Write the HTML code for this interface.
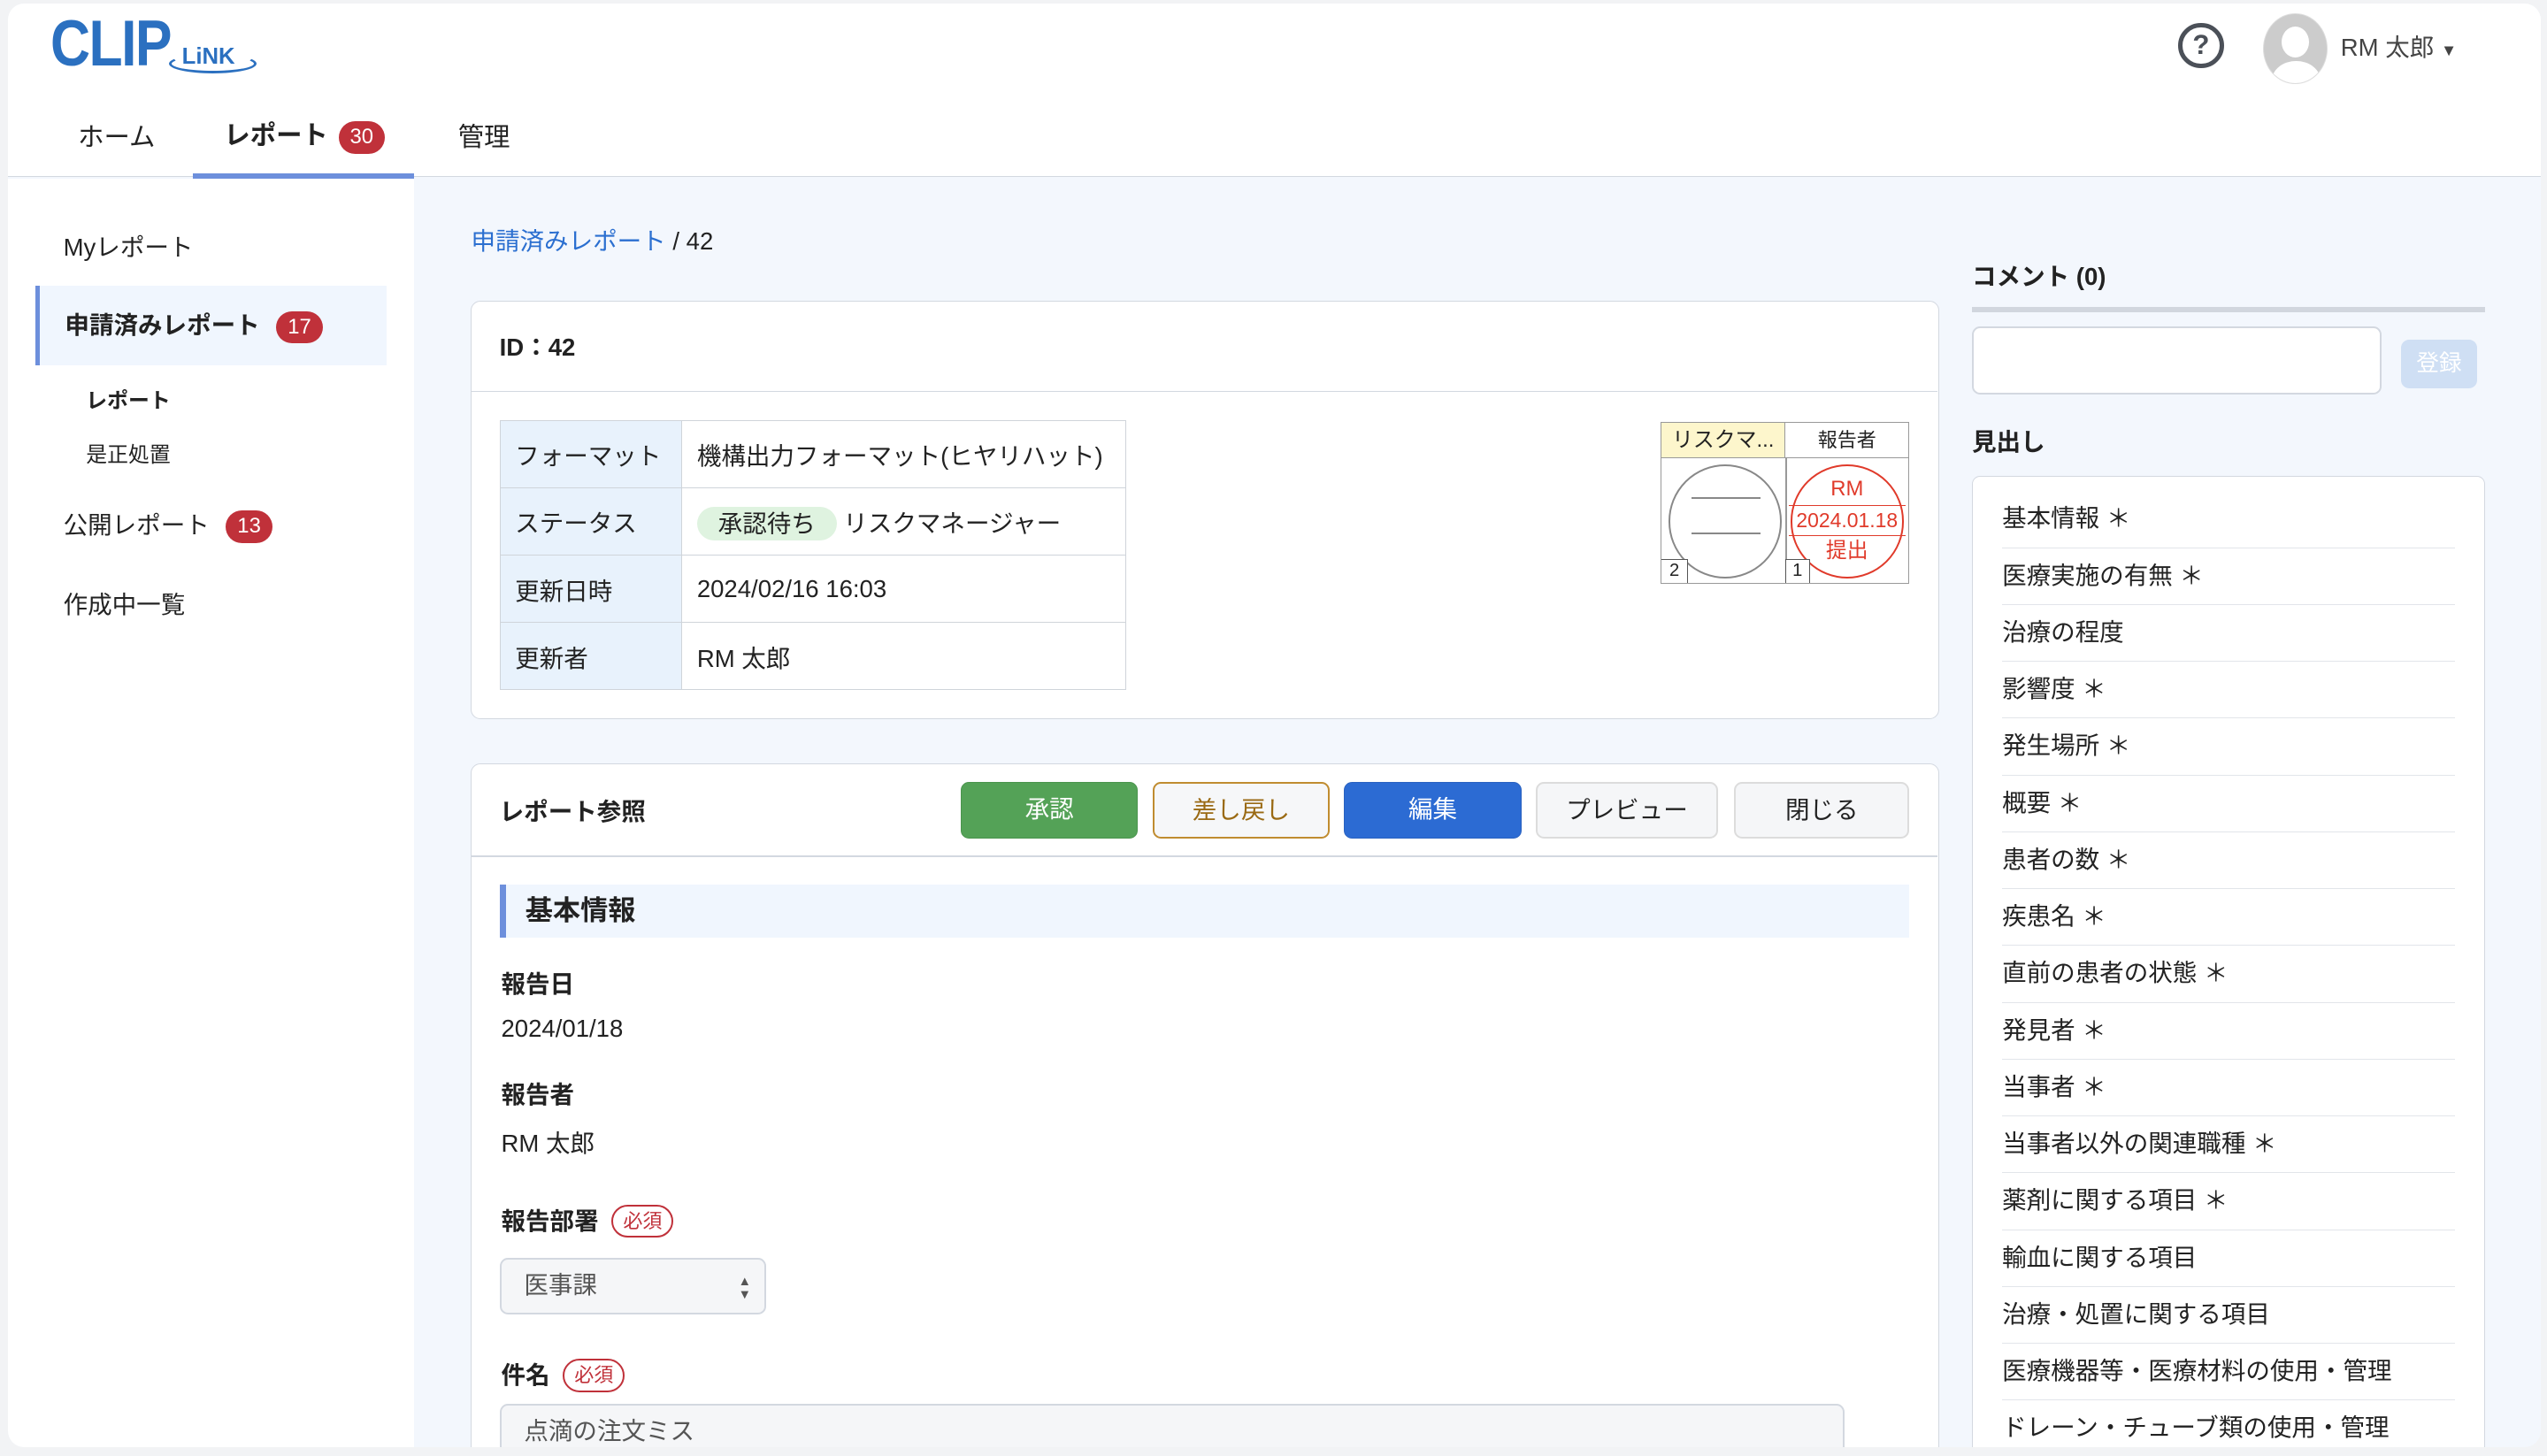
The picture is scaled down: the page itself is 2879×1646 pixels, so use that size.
<!DOCTYPE html>
<html><head><meta charset="utf-8"><style>
*{box-sizing:border-box;margin:0;padding:0}
html,body{width:2879px;height:1646px;overflow:hidden;background:#f2f3f5}
#r{zoom:1.83610;width:1568px;height:897px;position:relative;font-family:"Liberation Sans","Noto Sans CJK JP",sans-serif;color:#222;font-size:15px}
.a{position:absolute}
.page{left:5px;top:2px;width:1559px;height:889px;background:#f3f7fd;border-radius:10px;overflow:hidden}
.badge{display:inline-block;background:#c0313a;color:#fff;border-radius:11px;font-size:13px;line-height:20px;height:20px;padding:0 7px;font-weight:normal;vertical-align:middle}
.card{background:#fff;border:1px solid #d3d8e0;border-radius:6px}
table.info{border-collapse:collapse}
table.info td{border:1px solid #cfd4da;height:41.5px;padding:0 9px;font-size:15px}
table.info td.l{background:#e8f2fc;width:112px}
.btn{position:absolute;top:11px;height:35px;border-radius:5px;text-align:center;line-height:33px;font-size:15px}
.lbl{position:absolute;left:18px;font-weight:bold;font-size:15px}
.val{position:absolute;left:18px;font-size:15px}
.req{display:inline-block;border:1.5px solid #c0313a;color:#c0313a;border-radius:11px;font-size:12px;font-weight:normal;padding:0 6px;line-height:18px;margin-left:8px;vertical-align:1px}
.hl div{height:35px;line-height:34px;border-bottom:1px solid #e2e5ea;padding-left:0;font-size:15px}
</style></head><body><div id="r">
<div class="a page">
 <div class="a" style="left:0;top:0;width:1559px;height:107px;background:#fff;border-bottom:1px solid #d3d8e0"></div>
 <div class="a" style="left:0;top:108px;width:250px;height:790px;background:#fff"></div>
 <!-- logo -->
 <div class="a" style="left:26px;top:2px;font-size:40px;font-weight:bold;color:#2b70c0;letter-spacing:-1px;transform:scaleX(0.85);transform-origin:left">CLIP</div>
 <div class="a" style="left:107px;top:25px;font-size:14px;font-weight:bold;color:#2b70c0">LiNK</div>
 <div class="a" style="left:99px;top:31px;width:54px;height:12px;border:2px solid #2b70c0;border-radius:50%;border-top-color:transparent"></div>
 <!-- nav -->
 <div class="a" style="left:43px;top:70px;font-size:16px">ホーム</div>
 <div class="a" style="left:133px;top:69px;font-size:16px;font-weight:bold">レポート <span class="badge" style="margin-left:2px">30</span></div>
 <div class="a" style="left:277px;top:70px;font-size:16px">管理</div>
 <div class="a" style="left:114px;top:105px;width:136px;height:3px;background:#6d8fdc"></div>
 <!-- header right -->
 <div class="a" style="left:1336px;top:12px;width:28px;height:28px;border:3px solid #4b5058;border-radius:50%;text-align:center;font-weight:bold;font-size:17px;line-height:22px;color:#4b5058">?</div>
 <div class="a" style="left:1388px;top:6px;width:40px;height:44px;border-radius:50%;background:#ccc;border:1px solid #ddd;overflow:hidden">
  <div class="a" style="left:11px;top:8px;width:17px;height:19px;border-radius:50%;background:#fff"></div>
  <div class="a" style="left:5px;top:29px;width:30px;height:24px;border-radius:50%;background:#fff"></div>
 </div>
 <div class="a" style="left:1436px;top:15px;font-size:15px;color:#444">RM 太郎 <span style="font-size:10px">▼</span></div>
 <!-- sidebar -->
 <div class="a" style="left:34px;top:138px;font-size:15px">Myレポート</div>
 <div class="a" style="left:17px;top:174px;width:216px;height:49px;background:#f0f6fe;border-left:3px solid #6d8fdc"></div>
 <div class="a" style="left:35px;top:186px;font-size:15px;font-weight:bold">申請済みレポート <span class="badge" style="margin-left:6px">17</span></div>
 <div class="a" style="left:48px;top:234px;font-size:13px;font-weight:bold">レポート</div>
 <div class="a" style="left:48px;top:267px;font-size:13px">是正処置</div>
 <div class="a" style="left:34px;top:309px;font-size:15px">公開レポート <span class="badge" style="margin-left:6px">13</span></div>
 <div class="a" style="left:34px;top:358px;font-size:15px">作成中一覧</div>
 <!-- breadcrumb -->
 <div class="a" style="left:285px;top:134px;font-size:15px"><span style="color:#2b6fd0">申請済みレポート</span> / 42</div>
 <!-- card1 -->
 <div class="a card" style="left:285px;top:183px;width:904px;height:258px">
  <div class="a" style="left:17px;top:16px;font-weight:bold">ID：42</div>
  <div class="a" style="left:0;top:55px;width:902px;height:1px;background:#d3d8e0"></div>
  <table class="info a" style="left:17px;top:73px;width:386px">
   <tr><td class="l">フォーマット</td><td>機構出力フォーマット(ヒヤリハット)</td></tr>
   <tr><td class="l">ステータス</td><td><span style="background:#dff3e0;border-radius:11px;padding:2px 13px">承認待ち</span> リスクマネージャー</td></tr>
   <tr><td class="l">更新日時</td><td>2024/02/16 16:03</td></tr>
   <tr><td class="l">更新者</td><td>RM 太郎</td></tr>
  </table>
  <div class="a" style="left:732px;top:74px;width:153px;height:100px;border:1px solid #999">
   <div class="a" style="left:0;top:0;width:76px;height:22px;background:#fdf6cc;border-right:1px solid #999;border-bottom:1px solid #999;font-size:13px;text-align:center;line-height:22px">リスクマ...</div>
   <div class="a" style="left:76px;top:0;width:76px;height:22px;border-bottom:1px solid #999;font-size:12px;text-align:center;line-height:22px">報告者</div>
   <div class="a" style="left:76px;top:22px;width:1px;height:77px;background:#999"></div>
   <div class="a" style="left:4px;top:26px;width:70px;height:70px;border:1.5px solid #888;border-radius:50%"></div>
   <div class="a" style="left:18px;top:46px;width:43px;height:1px;background:#888"></div>
   <div class="a" style="left:18px;top:68px;width:43px;height:1px;background:#888"></div>
   <div class="a" style="left:0;top:84px;width:16px;height:15px;border:1px solid #555;border-left:0;border-bottom:0;background:#fff;font-size:11px;text-align:center;line-height:14px">2</div>
   <div class="a" style="left:79px;top:26px;width:70px;height:70px;border:1.5px solid #e03a2a;border-radius:50%;color:#e03a2a;text-align:center;font-size:13px">
    <div style="margin-top:6px;line-height:16px">RM</div>
    <div style="border-top:1px solid #e03a2a;border-bottom:1px solid #e03a2a;margin:2px -2px 0;line-height:18px;font-size:12.5px">2024.01.18</div>
    <div style="line-height:18px">提出</div>
   </div>
   <div class="a" style="left:76px;top:84px;width:15px;height:15px;border:1px solid #555;border-bottom:0;background:#fff;font-size:11px;text-align:center;line-height:14px">1</div>
  </div>
 </div>
 <!-- card2 -->
 <div class="a card" style="left:285px;top:468px;width:904px;height:440px">
  <div class="a" style="left:17px;top:17px;font-weight:bold">レポート参照</div>
  <div class="btn" style="left:301px;width:109px;background:#54a257;color:#fff;border:1px solid #4a944d">承認</div>
  <div class="btn" style="left:419px;width:109px;background:#f6f7f9;color:#9a6a14;border:1.5px solid #c08c30">差し戻し</div>
  <div class="btn" style="left:537px;width:109px;background:#2c6bd3;color:#fff;border:1px solid #2a62c0">編集</div>
  <div class="btn" style="left:655px;width:112px;background:#f5f6f8;border:1.5px solid #dcdcdc">プレビュー</div>
  <div class="btn" style="left:777px;width:108px;background:#f5f6f8;border:1.5px solid #dcdcdc">閉じる</div>
  <div class="a" style="left:0;top:56px;width:902px;height:1px;background:#d3d8e0"></div>
  <div class="a" style="left:17px;top:74px;width:868px;height:33px;background:#f0f6fe;border-left:4px solid #6d8fdc;font-weight:bold;font-size:17px;line-height:33px;padding-left:12px">基本情報</div>
  <div class="lbl" style="top:123px">報告日</div>
  <div class="val" style="top:154px">2024/01/18</div>
  <div class="lbl" style="top:191px">報告者</div>
  <div class="val" style="top:221px">RM 太郎</div>
  <div class="lbl" style="top:269px">報告部署<span class="req">必須</span></div>
  <div class="a" style="left:17px;top:304px;width:164px;height:35px;background:#f5f6f8;border:1.5px solid #d3d8e0;border-radius:5px;padding-left:14px;line-height:32px;color:#555">医事課<span style="position:absolute;right:8px;font-size:8px;line-height:8px;top:10px">▲<br>▼</span></div>
  <div class="lbl" style="top:364px">件名<span class="req">必須</span></div>
  <div class="a" style="left:17px;top:394px;width:828px;height:40px;background:#f5f6f8;border:1.5px solid #d3d8e0;border-radius:5px;padding-left:14px;line-height:32px;color:#555">点滴の注文ミス</div>
 </div>
 <!-- right column -->
 <div class="a" style="left:1209px;top:156px;font-weight:bold">コメント (0)</div>
 <div class="a" style="left:1209px;top:187px;width:316px;height:3px;background:#d1d6de"></div>
 <div class="a" style="left:1209px;top:199px;width:252px;height:42px;background:#fff;border:1.5px solid #d3d8e0;border-radius:5px"></div>
 <div class="a" style="left:1473px;top:207px;width:47px;height:30px;background:#cfdff4;border-radius:5px;color:#fff;text-align:center;line-height:30px;font-size:14px">登録</div>
 <div class="a" style="left:1209px;top:258px;font-weight:bold">見出し</div>
 <div class="a hl" style="left:1209px;top:291px;width:316px;height:610px;background:#fff;border:1px solid #d3d8e0;border-radius:5px;padding:9px 18px 0 18px">
  <div>基本情報 ＊</div><div>医療実施の有無 ＊</div><div>治療の程度</div><div>影響度 ＊</div><div>発生場所 ＊</div><div>概要 ＊</div><div>患者の数 ＊</div><div>疾患名 ＊</div><div>直前の患者の状態 ＊</div><div>発見者 ＊</div><div>当事者 ＊</div><div>当事者以外の関連職種 ＊</div><div>薬剤に関する項目 ＊</div><div>輸血に関する項目</div><div>治療・処置に関する項目</div><div>医療機器等・医療材料の使用・管理</div><div>ドレーン・チューブ類の使用・管理</div>
 </div>
</div>
</div></body></html>
